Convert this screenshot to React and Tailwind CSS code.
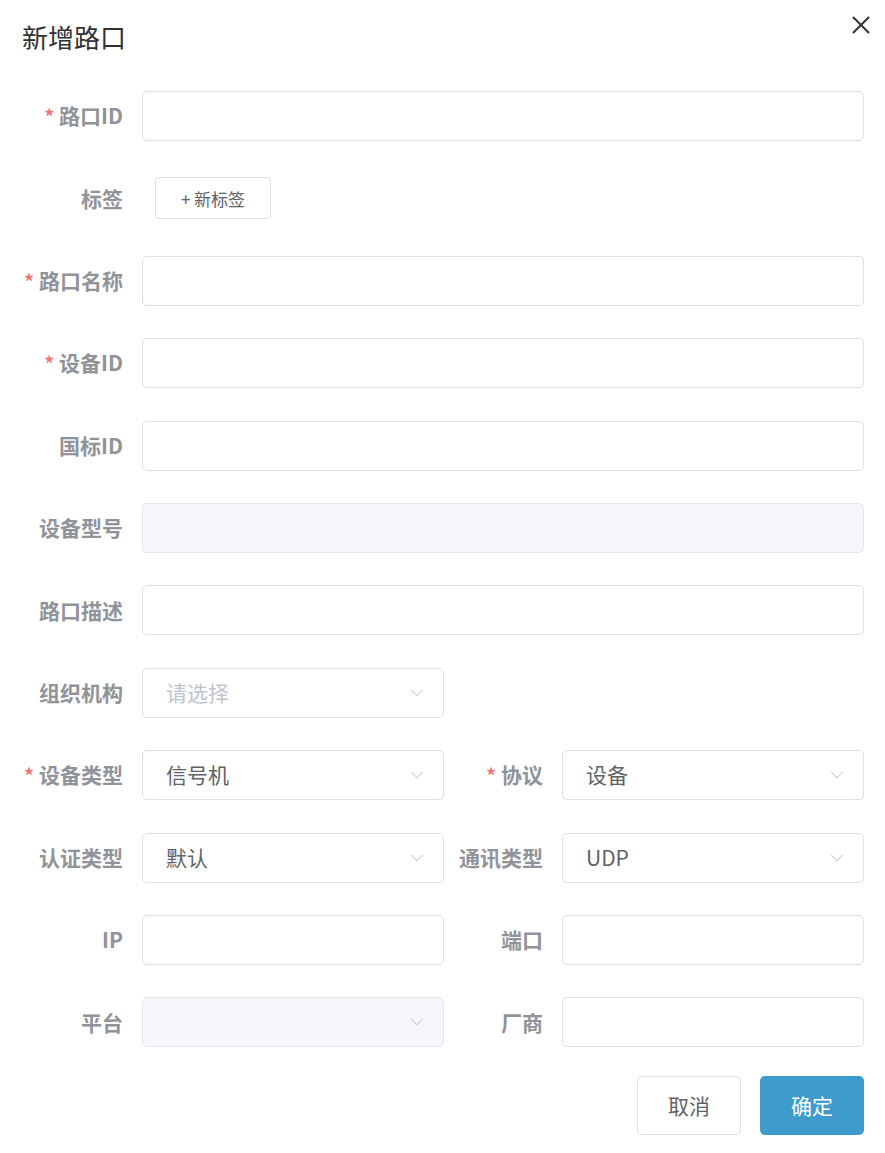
import { X, ChevronDown } from 'lucide-react';

const font = { fontFamily: '"Noto Sans CJK SC", "Noto Sans", sans-serif' };

function Label({ text, required, className = 'w-[142px]' }) {
    return (
        <div className={`${className} shrink-0 flex items-center justify-end pr-[19px] text-[21px] font-bold text-[#909399]`}>
            {required && <span className="text-[#f27474] mr-[5px] text-[19px]">*</span>}
            {text}
        </div>
    );
}

function Input({ disabled, className = 'flex-1' }) {
    return (
        <div className={`${className} h-[50px] rounded-[5px] border border-[#dcdfe6] ${disabled ? 'bg-[#f5f7fa] border-[#e4e7ed]' : 'bg-white'}`} />
    );
}

function Select({ value, placeholder, disabled }) {
    return (
        <div className={`w-[302px] h-[50px] rounded-[5px] border flex items-center justify-between pl-[23px] pr-[15px] text-[21px] ${disabled ? 'bg-[#f5f7fa] border-[#e4e7ed]' : 'bg-white border-[#dcdfe6]'}`}>
            <span className={value ? 'text-[#606266]' : 'text-[#c0c4cc]'}>{value || placeholder}</span>
            <ChevronDown size={22} strokeWidth={1.1} className="text-[#c0c4cc]" />
        </div>
    );
}

function Row({ children }) {
    return <div className="flex h-[50px] items-stretch">{children}</div>;
}

export default function App() {
    return (
        <div style={font} className="w-[885px] h-[1153px] bg-white relative">
            <button className="absolute left-[846px] top-[10px] text-[#303133]">
                <X size={30} strokeWidth={1.6} />
            </button>
            <h1 className="pl-[22px] pt-[19px] text-[26px] leading-[36px] text-[#303133]">新增路口</h1>

            <div className="mt-[36px] pr-[21px] flex flex-col gap-[32.4px]">
                <Row>
                    <Label text="路口ID" required />
                    <Input />
                </Row>
                <Row>
                    <Label text="标签" />
                    <div className="flex items-center">
                        <button className="ml-[13px] w-[116px] h-[42px] rounded-[4px] border border-[#dcdfe6] text-[17px] text-[#606266]">
                            + 新标签
                        </button>
                    </div>
                </Row>
                <Row>
                    <Label text="路口名称" required />
                    <Input />
                </Row>
                <Row>
                    <Label text="设备ID" required />
                    <Input />
                </Row>
                <Row>
                    <Label text="国标ID" />
                    <Input />
                </Row>
                <Row>
                    <Label text="设备型号" />
                    <Input disabled />
                </Row>
                <Row>
                    <Label text="路口描述" />
                    <Input />
                </Row>
                <Row>
                    <Label text="组织机构" />
                    <Select placeholder="请选择" />
                </Row>
                <Row>
                    <Label text="设备类型" required />
                    <Select value="信号机" />
                    <Label text="协议" required className="w-[118px]" />
                    <Select value="设备" />
                </Row>
                <Row>
                    <Label text="认证类型" />
                    <Select value="默认" />
                    <Label text="通讯类型" className="w-[118px]" />
                    <Select value="UDP" />
                </Row>
                <Row>
                    <Label text="IP" />
                    <Input className="w-[302px]" />
                    <Label text="端口" className="w-[118px]" />
                    <Input className="w-[302px]" />
                </Row>
                <Row>
                    <Label text="平台" />
                    <Select disabled />
                    <Label text="厂商" className="w-[118px]" />
                    <Input className="w-[302px]" />
                </Row>
            </div>

            <div className="mt-[29px] pr-[21px] flex justify-end gap-[19px]">
                <button className="w-[104px] h-[59px] rounded-[5px] border border-[#dcdfe6] bg-white text-[21px] text-[#606266]">取消</button>
                <button className="w-[104px] h-[59px] rounded-[5px] bg-[#3d9ccc] text-[21px] text-white">确定</button>
            </div>
        </div>
    );
}
